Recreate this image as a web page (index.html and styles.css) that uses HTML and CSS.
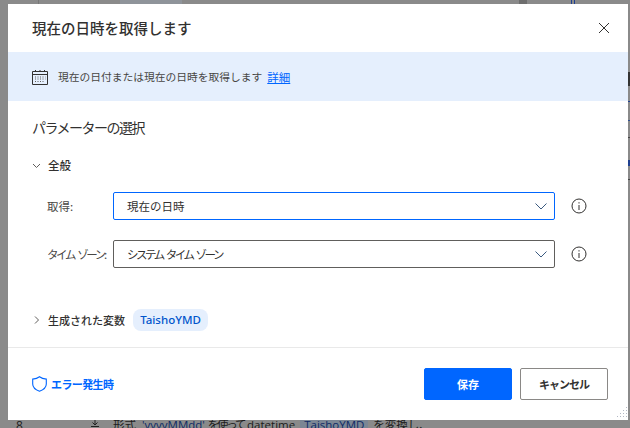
FILE: index.html
```html
<!DOCTYPE html>
<html lang="ja">
<head>
<meta charset="utf-8">
<title>現在の日時を取得します</title>
<link rel="stylesheet" href="styles.css">
</head>
<body>
<div class="backdrop">
  <div class="behind-top">
    <span class="bt bt1"></span><span class="bt bt2"></span><span class="bt bt3"></span><span class="bt bt4"></span>
  </div>
  <div class="behind-side"></div>
  <div class="behind-row">
    <span class="row-num">8</span>
    <svg class="row-icon" width="12" height="12" viewBox="0 0 12 12"><path d="M6 0v5M3.500 2.500L6 5 8.500 2.500M2 6.500h8" fill="none" stroke="#222" stroke-width="1"/></svg>
    <span class="row-text">形式 <b class="q">'yyyyMMdd'</b> <span class="tight">を使って</span> datetime <b class="tag">TaishoYMD</b> を変換し、</span>
  </div>
</div>
<main class="dialog">
  <header class="head">
    <h1 class="title">現在の日時を取得します</h1>
    <svg class="close" width="12" height="12" viewBox="0 0 12 12"><path d="M1 1L11 11M11 1L1 11" fill="none" stroke="#323130" stroke-width="1"/></svg>
  </header>
  <div class="banner">
    <svg class="cal" width="16" height="16" viewBox="0 0 16 16" fill="none" stroke="#323130"><path d="M.5 2.500h15v13H.5zM.5 5.500h15"/><path d="M3.500 1v2M8 1v2M12.500 1v2"/><path d="M3 8h1M5.500 8h1M8 8h1M10.500 8h1M13 8h.5M3 10h1M5.500 10h1M8 10h1M10.500 10h1M13 10h.5M3 12.500h1M5.500 12.500h1M8 12.500h1M10.500 12.500h1" stroke-width="1" stroke="#605e5c"/></svg>
    <span class="banner-text">現在の日付または現在の日時を取得します</span>
    <a class="link" href="#">詳細</a>
  </div>
  <section class="body">
    <h2 class="sub">パラメーターの選択</h2>
    <div class="group">
      <svg class="chev" width="9" height="9" viewBox="0 0 9 9"><path d="M1 3L4.500 6.500 8 3" fill="none" stroke="#605e5c"/></svg>
      <span class="group-name">全般</span>
    </div>
    <div class="field">
      <label class="lab">取得:</label>
      <div class="select focus"><span>現在の日時</span>
        <svg class="arrow" width="12" height="7" viewBox="0 0 12 7"><path d="M.5.5L6 6 11.500.5" fill="none" stroke="#3a5a80" stroke-width="1"/></svg>
      </div>
      <svg class="info" width="16" height="16" viewBox="0 0 16 16"><circle cx="8" cy="8" r="7" fill="none" stroke="#323130"/><path d="M8 4.200v1.300M8 7v5" stroke="#323130" fill="none"/></svg>
    </div>
    <div class="field second">
      <label class="lab kana">タイム ゾーン:</label>
      <div class="select"><span class="kana-value">システム タイム ゾーン</span>
        <svg class="arrow" width="12" height="7" viewBox="0 0 12 7"><path d="M.5.5L6 6 11.500.5" fill="none" stroke="#3a5a80" stroke-width="1"/></svg>
      </div>
      <svg class="info" width="16" height="16" viewBox="0 0 16 16"><circle cx="8" cy="8" r="7" fill="none" stroke="#323130"/><path d="M8 4.200v1.300M8 7v5" stroke="#323130" fill="none"/></svg>
    </div>
    <div class="vars">
      <svg class="chev-r" width="9" height="10" viewBox="0 0 9 10"><path d="M3 1.500L6.500 5 3 8.500" fill="none" stroke="#605e5c"/></svg>
      <span class="vars-name">生成された変数</span>
      <span class="pill">TaishoYMD</span>
    </div>
  </section>
  <footer class="foot">
    <a class="err" href="#">
      <svg width="15" height="16" viewBox="0 0 15 16"><path d="M7.500.8C5.500 2.400 3.200 3 .7 3.100V8c0 3.200 2.600 5.700 6.800 7.200 4.200-1.500 6.800-4 6.800-7.200V3.100C11.800 3 9.500 2.400 7.500.8z" fill="none" stroke="#0066ff" stroke-width="1.100"/></svg>
      <span>エラー発生時</span>
    </a>
    <div class="btns">
      <button class="btn primary">保存</button>
      <button class="btn cancel">キャンセル</button>
    </div>
    <svg class="grip" width="11" height="11" viewBox="0 0 11 11" fill="#b3b8c4"><rect x="9" y="0" width="1" height="1"/><rect x="9" y="3" width="1" height="1"/><rect x="6" y="3" width="1" height="1"/><rect x="9" y="6" width="1" height="1"/><rect x="6" y="6" width="1" height="1"/><rect x="3" y="6" width="1" height="1"/><rect x="9" y="9" width="1" height="1"/><rect x="6" y="9" width="1" height="1"/><rect x="3" y="9" width="1" height="1"/><rect x="0" y="9" width="1" height="1"/></svg>
  </footer>
</main>
</body>
</html>
```
FILE: styles.css
```css
* { box-sizing: border-box; }
html, body { margin: 0; height: 100%; }
body {
  width: 630px; height: 428px; overflow: hidden; position: relative;
  background: #8a8a8a;
  font-family: "Noto Sans CJK JP", "Open Sans", sans-serif;
  color: #323130;
  padding: 4px 2px 0 8px;
}
.backdrop { position: absolute; inset: 0; }
.behind-top { position: absolute; top: 0; left: 0; right: 0; height: 4px; }
.bt { position: absolute; top: 0; height: 4px; }
.bt1 { left: 38px; width: 1px; background: #777; }
.bt2 { left: 120px; width: 62px; background: #8f949a; }
.bt3 { left: 519px; width: 8px; background: #6e6e6e; }
.bt4 { left: 571px; width: 4px; border-left: 1px solid #1f3f8f; border-right: 1px solid #1f3f8f; }
.behind-side {
  position: absolute; left: 628px; top: 72px; width: 2px; height: 120px;
  background: linear-gradient(#333 0 14px, #8a8a8a 14px 29px, #1f3f8f 29px 30px, #8a8a8a 30px 48px, #2f4f8f 48px 49px, #8a8a8a 49px 65px, #444 65px 66px, #8a8a8a 66px 88px, #1f3f8f 88px 94px, #8a8a8a 94px 107px, #444 107px 108px, #8a8a8a 108px);
}
.behind-row { position: absolute; left: 0; right: 0; top: 420px; height: 8px; font-size: 11.500px; line-height: 14px; color: #1c1c1c; white-space: nowrap; overflow: hidden; }
.row-num { position: absolute; left: 16px; top: -1px; font-family: "Open Sans", sans-serif; font-size: 12px; }
.row-icon { position: absolute; left: 89px; top: 0; }
.row-text { position: absolute; left: 113px; top: -2px; font-family: "Open Sans", "Noto Sans CJK JP", sans-serif; }
.q { font-weight: 400; color: #0f2a66; margin-left: 3px; }
.tight { letter-spacing: -2.300px; }
.tag { font-weight: 400; color: #0f2a66; background: #7b8694; padding: 0 4px; margin: 0 2px; }

.dialog { position: relative; width: 620px; height: 416px; background: #fff; display: flex; flex-direction: column; }
.head { height: 48px; display: flex; align-items: center; justify-content: space-between; padding: 0 18px 0 24px; flex: none; }
.title { margin: 0; font-size: 14.500px; font-weight: 500; line-height: 20px; color: #323130; }
.close { display: block; }
.banner { height: 49px; flex: none; background: #e5effd; display: flex; align-items: center; padding-left: 24px; font-size: 10.750px; color: #484644; }
.cal { margin-right: 10px; flex: none; }
.banner-text { line-height: 16px; }
.link { color: #0066ff; margin-left: 5px; text-decoration: underline; font-size: 11.500px; }
.body { flex: 1; padding: 15px 0 0 24px; }
.sub { margin: 0; font-size: 14px; font-weight: 400; line-height: 22px; color: #323130; letter-spacing: -1.500px; }
.group { display: flex; align-items: center; margin-top: 19px; height: 16px; }
.chev { margin-right: 7px; display: block; flex: none; }
.group-name { font-size: 11.500px; font-weight: 500; line-height: 16px; color: #323130; }
.vars-name { font-size: 11px; font-weight: 500; line-height: 16px; color: #323130; }
.field { display: flex; align-items: center; margin-top: 19px; height: 28px; padding-left: 15px; }
.field.second { margin-top: 20px; }
.lab { width: 66px; flex: none; font-size: 11.500px; line-height: 16px; color: #484644; white-space: nowrap; }
.lab.kana { letter-spacing: -2.400px; word-spacing: 3px; }
.select { width: 442px; height: 28px; flex: none; border: 1px solid #605e5c; border-radius: 2px; display: flex; align-items: center; justify-content: space-between; padding: 0 7px 0 13px; font-size: 11.500px; color: #323130; }
.select.focus { border-color: #0066ff; }
.kana-value { letter-spacing: -2.500px; word-spacing: 3px; }
.arrow { display: block; }
.info { margin-left: 16px; flex: none; }
.vars { display: flex; align-items: center; margin-top: 41px; height: 22px; }
.chev-r { margin-right: 7px; display: block; flex: none; }
.pill { margin-left: 8px; width: 75px; height: 22px; text-align: center; border-radius: 8px; background: #e5effd; color: #0055cc; font-family: "Noto Sans", "Open Sans", sans-serif; font-size: 11.500px; font-weight: 500; line-height: 22px; }
.foot { position: relative; height: 73px; flex: none; border-top: 1px solid #e9e9e9; display: flex; align-items: center; justify-content: space-between; padding: 0 20px 0 24px; }
.err { display: flex; align-items: center; gap: 4px; color: #0066ff; text-decoration: none; font-size: 11px; font-weight: 700; letter-spacing: -.6px; }
.err svg { display: block; }
.btns { display: flex; gap: 8px; }
.btn { width: 88px; height: 32px; border: 1px solid #8a8886; border-radius: 2px; background: #fff; color: #323130; font-family: inherit; font-size: 11px; font-weight: 700; padding: 0; }
.btn.cancel { letter-spacing: -1px; }
.btn.primary { background: #0066ff; border-color: #0066ff; color: #fff; }
.grip { position: absolute; right: 0; bottom: 2px; }
```
